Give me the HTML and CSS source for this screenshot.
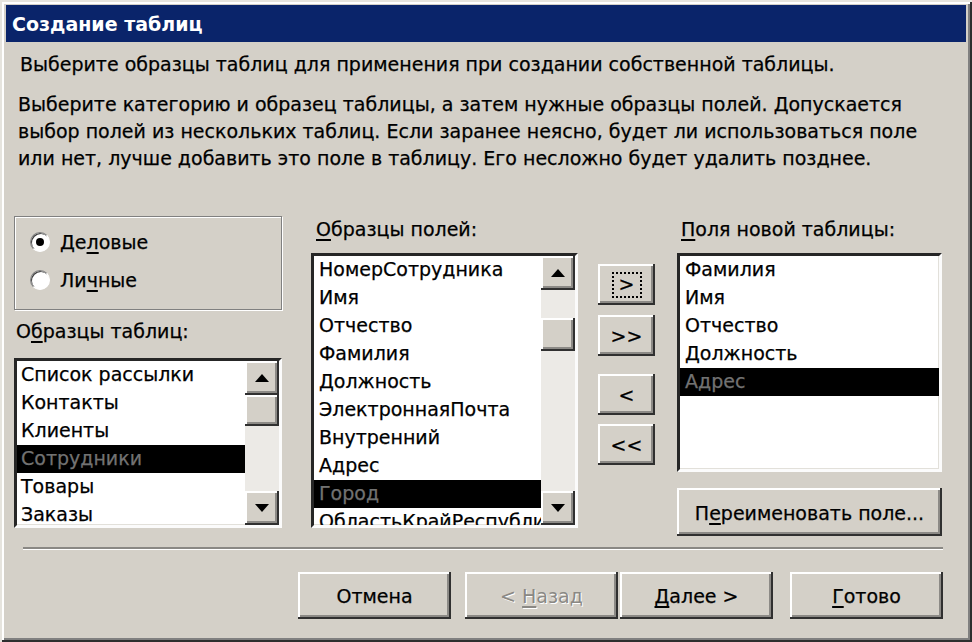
FILE: index.html
```html
<!DOCTYPE html>
<html lang="ru">
<head>
<meta charset="utf-8">
<title>Создание таблиц</title>
<link rel="stylesheet" href="styles.css">
</head>
<body>
<div class="window">
  <div class="titlebar">Создание таблиц</div>
  <div class="content">
    <p class="intro">Выберите образцы таблиц для применения при создании собственной таблицы.</p>
    <p class="desc">Выберите категорию и образец таблицы, а затем нужные образцы полей. Допускается<br>выбор полей из нескольких таблиц. Если заранее неясно, будет ли использоваться поле<br>или нет, лучше добавить это поле в таблицу. Его несложно будет удалить позднее.</p>

    <div class="main">
      <div class="col col-left">
        <div class="groupbox">
          <div class="radio"><span class="radio-circle checked"></span><span class="radio-text">Де<u>л</u>овые</span></div>
          <div class="radio"><span class="radio-circle"></span><span class="radio-text">Ли<u>ч</u>ные</span></div>
        </div>
        <div class="label label-tables">О<u>б</u>разцы таблиц:</div>
        <div class="listbox list-tables">
          <div class="items">
            <div class="item">Список рассылки</div>
            <div class="item">Контакты</div>
            <div class="item">Клиенты</div>
            <div class="item selected">Сотрудники</div>
            <div class="item">Товары</div>
            <div class="item">Заказы</div>
          </div>
          <div class="scrollbar">
            <div class="sb-btn raised"><svg width="14" height="8" viewBox="0 0 14 8"><polygon points="7,0 14,8 0,8" fill="#000"/></svg></div>
            <div class="sb-track">
              <div class="sb-thumb raised thumb-tables"></div>
            </div>
            <div class="sb-btn raised"><svg width="14" height="8" viewBox="0 0 14 8"><polygon points="0,0 14,0 7,8" fill="#000"/></svg></div>
          </div>
        </div>
      </div>

      <div class="col col-mid">
        <div class="label label-fields"><u>О</u>бразцы полей:</div>
        <div class="listbox list-fields">
          <div class="items">
            <div class="item">НомерСотрудника</div>
            <div class="item">Имя</div>
            <div class="item">Отчество</div>
            <div class="item">Фамилия</div>
            <div class="item">Должность</div>
            <div class="item">ЭлектроннаяПочта</div>
            <div class="item">Внутренний</div>
            <div class="item">Адрес</div>
            <div class="item selected">Город</div>
            <div class="item">ОбластьКрайРеспублика</div>
          </div>
          <div class="scrollbar">
            <div class="sb-btn raised"><svg width="14" height="8" viewBox="0 0 14 8"><polygon points="7,0 14,8 0,8" fill="#000"/></svg></div>
            <div class="sb-track">
              <div class="sb-thumb raised thumb-fields"></div>
            </div>
            <div class="sb-btn raised"><svg width="14" height="8" viewBox="0 0 14 8"><polygon points="0,0 14,0 7,8" fill="#000"/></svg></div>
          </div>
        </div>
      </div>

      <div class="col col-buttons">
        <div class="btn raised move-btn"><span class="focus">&gt;</span></div>
        <div class="btn raised move-btn move-all"><span>&gt;&gt;</span></div>
        <div class="btn raised move-btn move-back"><span>&lt;</span></div>
        <div class="btn raised move-btn move-back-all"><span>&lt;&lt;</span></div>
      </div>

      <div class="col col-right">
        <div class="label label-new"><u>П</u>оля новой таблицы:</div>
        <div class="listbox list-new">
          <div class="items">
            <div class="item">Фамилия</div>
            <div class="item">Имя</div>
            <div class="item">Отчество</div>
            <div class="item">Должность</div>
            <div class="item selected">Адрес</div>
          </div>
        </div>
        <div class="btn raised rename-btn"><span>П<u>е</u>реименовать поле...</span></div>
      </div>
    </div>

    <div class="separator"></div>

    <div class="footer">
      <div class="btn raised footer-btn btn-cancel"><span>Отмена</span></div>
      <div class="btn raised footer-btn btn-back disabled"><span>&lt; <u>Н</u>азад</span></div>
      <div class="btn raised footer-btn btn-next"><span><u>Д</u>алее &gt;</span></div>
      <div class="btn raised footer-btn btn-finish"><span><u>Г</u>отово</span></div>
    </div>
  </div>
</div>
</body>
</html>
```

FILE: styles.css
```css
* {
  box-sizing: border-box;
}

html, body {
  margin: 0;
  padding: 0;
}

body {
  width: 972px;
  height: 642px;
  overflow: hidden;
  background: #d4d0c8;
  font-family: "DejaVu Sans", "Noto Sans", sans-serif;
  font-size: 19px;
  color: #000;
  -webkit-text-stroke: 0.25px currentColor;
}

u {
  text-decoration-thickness: 2px;
  text-underline-offset: 3px;
}

.window {
  width: 972px;
  height: 642px;
  background: #d4d0c8;
  padding: 5px 6px 6px 6px;
  box-shadow:
    inset 2px 2px 0 #e6e4de,
    inset -2px -2px 0 #2e2e2e,
    inset 4px 4px 0 #ffffff,
    inset -4px -4px 0 #808080;
}

.titlebar {
  height: 37px;
  background: #0a246a;
  color: #fff;
  font-weight: bold;
  font-size: 19px;
  line-height: 38px;
  padding-left: 6px;
  -webkit-text-stroke: 0;
}

.content {
  padding-left: 8px;
}

.intro {
  margin: 9px 0 0 6px;
  line-height: 27px;
}

.desc {
  margin: 13px 0 0 4px;
  line-height: 27px;
}

.main {
  display: flex;
  height: 320px;
  margin-top: 44px;
}

.col {
  display: flex;
  flex-direction: column;
}

.col-left {
  width: 268px;
}

.col-mid {
  width: 267px;
  margin-left: 29px;
}

.col-buttons {
  width: 57px;
  margin-left: 20px;
  padding-top: 48px;
}

.col-right {
  width: 265px;
  margin-left: 22px;
}

/* group box */
.groupbox {
  height: 94px;
  border: 1px solid #808080;
  box-shadow: inset 1px 1px 0 #fff, 1px 1px 0 #fff;
  padding-top: 6px;
}

.radio {
  display: flex;
  align-items: center;
  height: 38px;
  padding-left: 15px;
}

.radio-circle {
  position: relative;
  width: 20px;
  height: 20px;
  border-radius: 50%;
  background: #fff;
  border: 1px solid;
  border-color: #808080 #fff #fff #808080;
  box-shadow: inset 1px 1px 0 #404040;
  flex: none;
}

.radio-circle.checked::after {
  content: "";
  position: absolute;
  left: 5px;
  top: 5px;
  width: 8px;
  height: 8px;
  border-radius: 50%;
  background: #000;
}

.radio-text {
  margin-left: 10px;
}

/* labels */
.label {
  line-height: 27px;
  height: 27px;
}

.label-tables {
  margin-top: 8px;
  padding-left: 2px;
}

.label-fields {
  padding-left: 5px;
}

.label-new {
  padding-left: 4px;
}

/* list boxes */
.listbox {
  display: flex;
  background: #fff;
  border: 3px solid;
  border-color: #262626 #fbfbfb #fbfbfb #262626;
  box-shadow: inset -1px -1px 0 #e2e0da;
  overflow: hidden;
}

.list-tables {
  height: 170px;
  margin-top: 13px;
}

.list-fields {
  height: 275px;
  margin-top: 10px;
}

.list-new {
  height: 219px;
  margin-top: 10px;
}

.items {
  flex: 1;
  overflow: hidden;
  min-width: 0;
}

.item {
  height: 28px;
  line-height: 27px;
  white-space: nowrap;
  padding-left: 4px;
}

.list-fields .item,
.list-new .item {
  padding-left: 5px;
}

.item.selected {
  background: #000;
  color: #727272;
}

/* scrollbars */
.scrollbar {
  width: 34px;
  flex: none;
  display: flex;
  flex-direction: column;
  background: #eceae6;
}

.sb-btn {
  height: 34px;
  flex: none;
  display: flex;
  align-items: center;
  justify-content: center;
}

.sb-track {
  flex: 1;
}

.sb-thumb {
  height: 31px;
}

.thumb-fields {
  margin-top: 28px;
  height: 33px;
}

.raised {
  background: #d4d0c8;
  box-shadow:
    inset -2px -2px 0 #303030,
    inset 2px 2px 0 #ffffff,
    inset -4px -4px 0 #8c8a86;
}

/* buttons */
.btn {
  display: flex;
  align-items: center;
  justify-content: center;
  white-space: nowrap;
}

.move-btn {
  height: 41px;
  flex: none;
}

.move-all {
  margin-top: 10px;
}

.move-back {
  margin-top: 18px;
}

.move-back-all {
  margin-top: 9px;
}

.focus {
  width: 30px;
  height: 26px;
  border: 2px dotted #000;
  display: flex;
  align-items: center;
  justify-content: center;
  line-height: 1;
}

.rename-btn {
  height: 48px;
  margin-top: 16px;
  padding-top: 2px;
}

.separator {
  height: 3px;
  margin: 11px 23px 0 9px;
  border-top: 2px solid #8a8884;
  border-bottom: 1px solid #fff;
}

.footer {
  display: flex;
  justify-content: flex-end;
  margin-top: 22px;
  padding-right: 23px;
}

.footer-btn {
  width: 153px;
  height: 47px;
}

.btn-cancel {
  margin-right: 14px;
}

.btn-back {
  margin-right: 2px;
}

.btn-next {
  margin-right: 17px;
}

.disabled {
  color: #8a8884;
  text-shadow: 1px 1px 0 #fff;
  -webkit-text-stroke: 0;
}
```
